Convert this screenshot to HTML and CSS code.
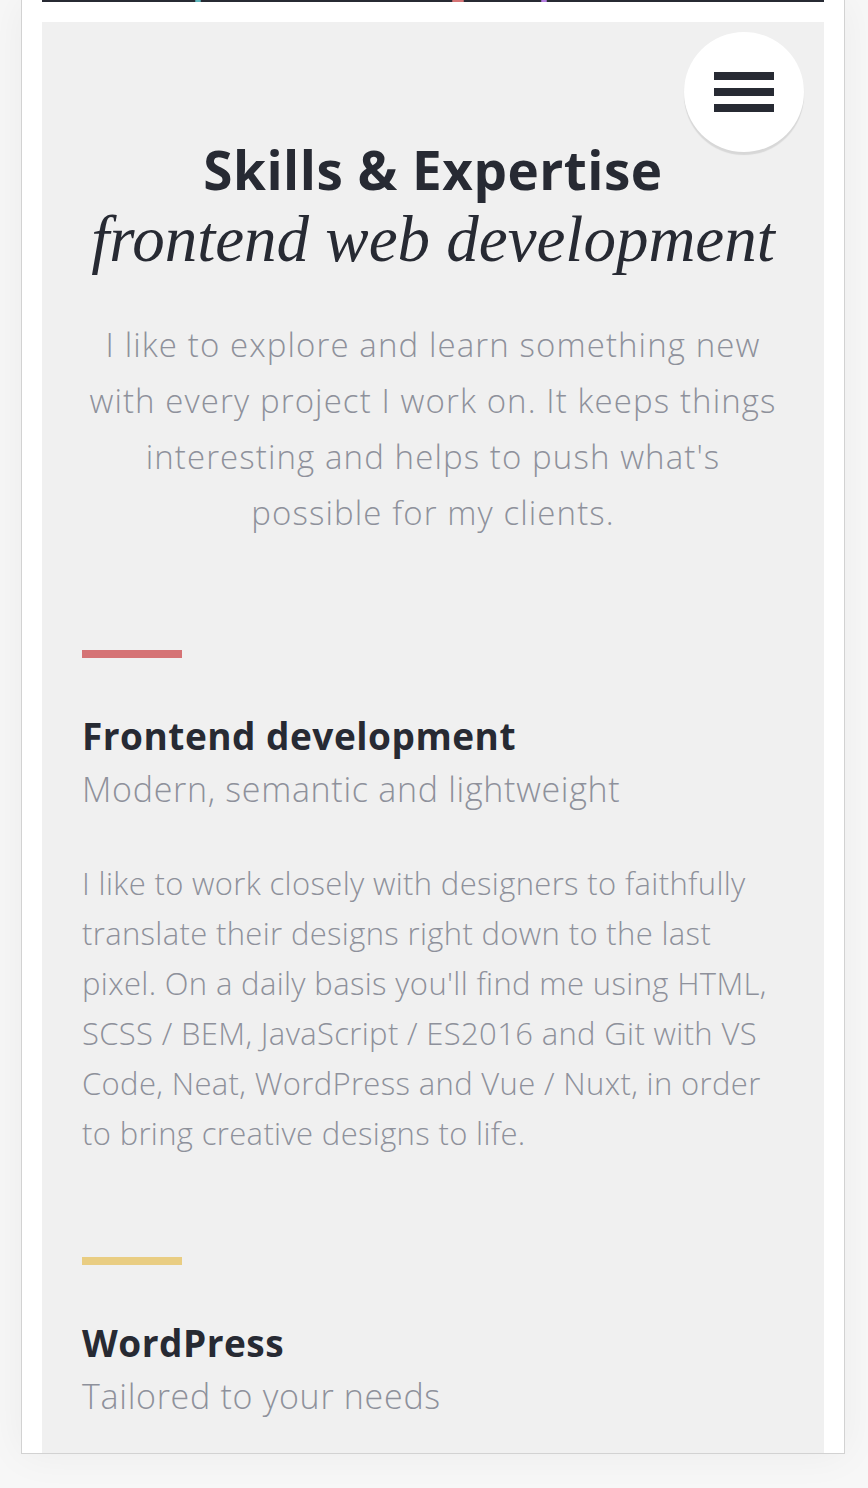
FILE: index.html
```html
<!DOCTYPE html>
<html lang="en">
<head>
<meta charset="utf-8">
<title>Skills &amp; Expertise</title>
<link rel="stylesheet" href="styles.css">
</head>
<body>
<div class="frame">
  <div class="topbar">
    <span class="spot spot-teal"></span>
    <span class="spot spot-red"></span>
    <span class="spot spot-purple"></span>
  </div>
  <section class="panel">
    <button class="menu-btn" aria-label="Menu">
      <span class="menu-line"></span>
      <span class="menu-line"></span>
      <span class="menu-line"></span>
    </button>
    <h1 class="title">
      <span class="title-main">Skills &amp; Expertise</span>
      <span class="title-sub">frontend web development</span>
    </h1>
    <p class="intro">I like to explore and learn something new with every project I work on. It keeps things interesting and helps to push what's possible for my clients.</p>

    <article class="skill">
      <div class="skill-bar bar-red"></div>
      <h2 class="skill-title">Frontend development</h2>
      <p class="skill-sub">Modern, semantic and lightweight</p>
      <p class="skill-text">I like to work closely with designers to faithfully translate their designs right down to the last pixel. On a daily basis you'll find me using HTML, SCSS / BEM, JavaScript / ES2016 and Git with VS Code, Neat, WordPress and Vue / Nuxt, in order to bring creative designs to life.</p>
    </article>

    <article class="skill">
      <div class="skill-bar bar-yellow"></div>
      <h2 class="skill-title">WordPress</h2>
      <p class="skill-sub">Tailored to your needs</p>
    </article>
  </section>
</div>
</body>
</html>
```
FILE: styles.css
```css
html, body {
  margin: 0;
  padding: 0;
}
body {
  background: #f7f7f7;
  font-family: "Open Sans", "Liberation Sans", sans-serif;
  font-variant-ligatures: none;
  height: 1488px;
  overflow: hidden;
}
.frame {
  margin-left: 21px;
  width: 824px;
  height: 1454px;
  box-sizing: border-box;
  background: #fff;
  border: 1px solid #d2d2d2;
  border-top: none;
  padding: 0 20px;
  box-shadow: 0 0 40px rgba(0, 0, 0, 0.05);
  display: flex;
  flex-direction: column;
  overflow: hidden;
}
.topbar {
  height: 2px;
  background: #272a33;
  position: relative;
  flex: none;
}
.spot {
  position: absolute;
  top: 0;
  height: 2px;
  border-radius: 2px;
}
.spot-teal { left: 153px; width: 6px; background: #5fb7bd; }
.spot-red { left: 410px; width: 12px; background: #d57375; }
.spot-purple { left: 499px; width: 6px; background: #b57de0; }

.panel {
  margin-top: 20px;
  flex: 1;
  background: #f0f0f0;
  padding: 0 40px;
  position: relative;
}
.menu-btn {
  position: absolute;
  top: 10px;
  right: 20px;
  width: 120px;
  height: 120px;
  border-radius: 50%;
  border: none;
  background: #fff;
  box-shadow: 0 3px 1px rgba(0, 0, 0, 0.1);
  display: flex;
  flex-direction: column;
  align-items: center;
  justify-content: center;
  gap: 8px;
  padding: 0;
}
.menu-line {
  display: block;
  width: 60px;
  height: 8px;
  background: #272a33;
}
.title {
  margin: 116px 0 0;
  text-align: center;
  color: #272a33;
  font-weight: normal;
}
.title-main {
  display: block;
  font-weight: 700;
  font-size: 53px;
  line-height: 64px;
  letter-spacing: 0.5px;
}
.title-sub {
  display: block;
  font-family: "Liberation Serif", serif;
  font-style: italic;
  font-size: 65px;
  line-height: 74px;
}
.intro {
  margin: 41px 0 0;
  text-align: center;
  color: #8e919b;
  font-weight: 300;
  font-size: 33px;
  letter-spacing: 1.1px;
  line-height: 56px;
}
.skill {
  margin-top: 109px;
}
.skill + .skill {
  margin-top: 99px;
}
.skill-bar {
  width: 100px;
  height: 8px;
}
.bar-red { background: #d57375; }
.bar-yellow { background: #e9cd82; }
.skill-title {
  margin: 56px 0 0;
  color: #272a33;
  font-weight: 700;
  font-size: 37px;
  letter-spacing: 0.5px;
  line-height: 44px;
}
.skill-sub {
  margin: 8px 0 0;
  color: #8e919b;
  font-weight: 300;
  font-size: 34px;
  letter-spacing: 0.7px;
  line-height: 46px;
}
.skill-text {
  margin: 46px 0 0;
  color: #8e919b;
  font-weight: 300;
  font-size: 31px;
  letter-spacing: 0.35px;
  line-height: 50px;
}
```
